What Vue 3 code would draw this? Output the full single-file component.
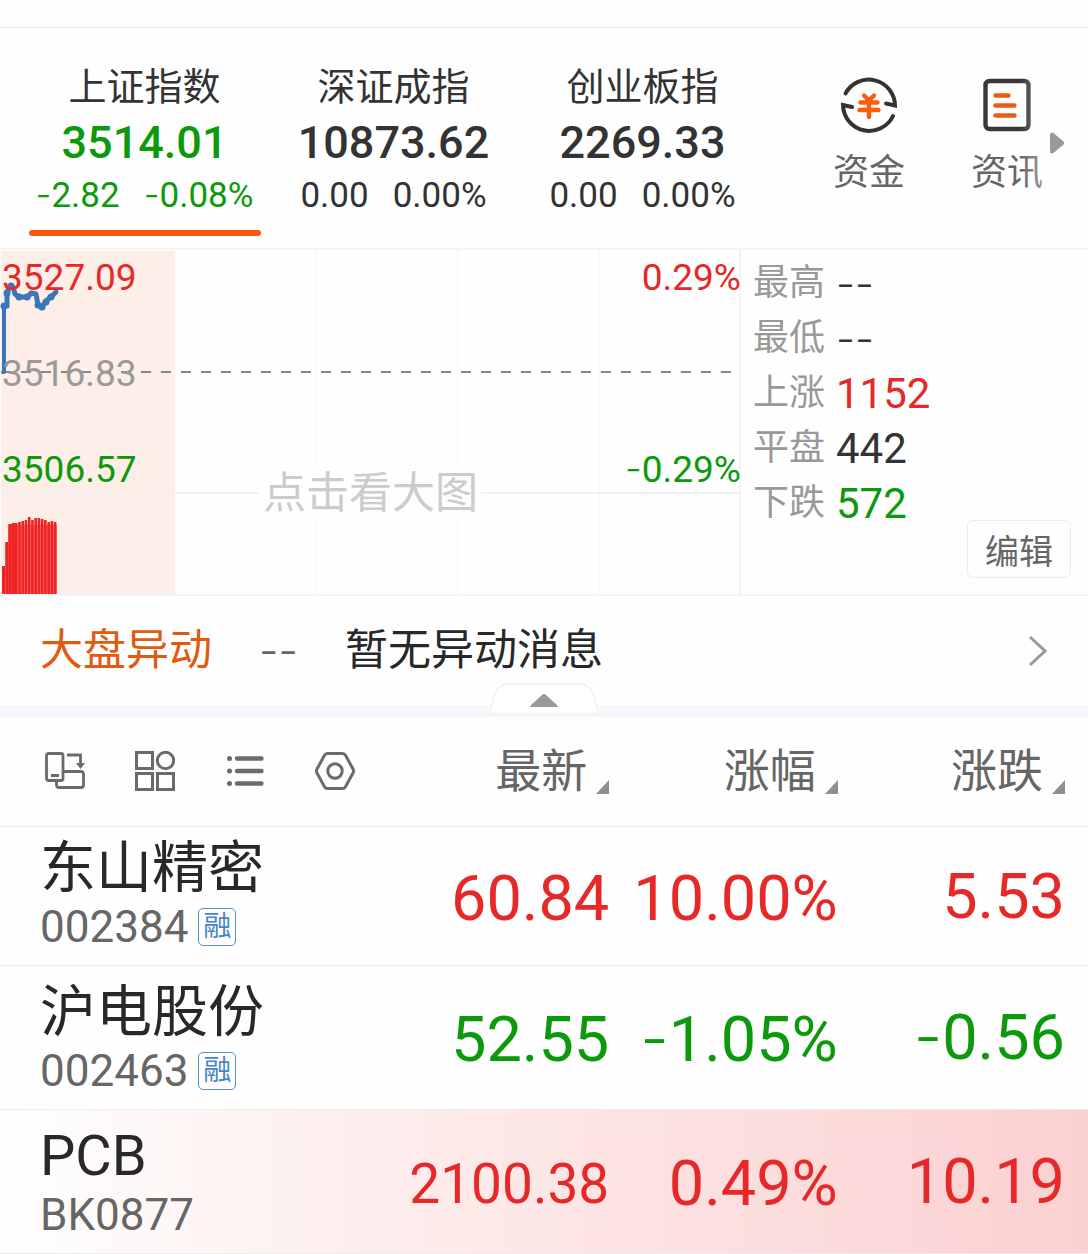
<template>
  <div class="market">
    <div class="market-strip"></div>

    <header class="summary">
      <button
        type="button"
        class="index-tab"
        :class="[{ active: index === activeIndex }, item.trend]"
        v-for="(item, index) in indices"
        :key="item.name"
        @click="activeIndex = index"
      >
        <span class="index-name">{{ item.name }}</span>
        <span class="index-price">{{ item.price }}</span>
        <span class="index-change">
          <span v-for="value in [item.change, item.percent]" :key="value">
            <span class="sign minus" v-if="isNegative(value)">-</span>{{ unsigned(value) }}
          </span>
        </span>
      </button>
      <nav class="links">
        <a class="link" href="#funds">
          <svg class="link-icon" viewBox="0 0 60 60" aria-hidden="true">
            <g fill="none" stroke="#333" stroke-width="4" stroke-linecap="round" stroke-linejoin="miter">
              <path d="M6.500 19.500A26.300 26.300 0 0 1 56 31.500L47 29.500" />
              <path d="M54 42A26.300 26.300 0 0 1 4 31L13 33" />
            </g>
            <path
              d="M25 21.500l5 5 5-5M21.500 28.500h17M20.500 36h19M30 27.500v15.500"
              fill="none"
              stroke="#ff5a0a"
              stroke-width="4.400"
              stroke-linecap="round"
            />
          </svg>
          <span>资金</span>
        </a>
        <a class="link" href="#news">
          <svg class="link-icon" viewBox="0 0 60 60" aria-hidden="true">
            <rect x="8.500" y="7" width="43" height="48" rx="4" fill="none" stroke="#383838" stroke-width="4.400" />
            <path d="M18.500 21.500h13M18.500 31.500h19M18.500 41.500h19" fill="none" stroke="#ea5b14" stroke-width="4.400" stroke-linecap="round" />
          </svg>
          <span>资讯</span>
        </a>
      </nav>
      <button type="button" class="links-more" aria-label="更多">
        <svg viewBox="0 0 16 24" aria-hidden="true">
          <path d="M1 4.500Q1 0 4.500 2L14.500 10.500Q16 12 14.500 13.500L4.500 22Q1 24 1 19.500Z" fill="#999" />
        </svg>
      </button>
    </header>

    <section class="overview">
      <div class="chart">
        <svg class="chart-canvas" viewBox="0 0 741 344" preserveAspectRatio="none" aria-hidden="true">
          <rect x="1" y="1" width="174" height="343" fill="#fdeee8" />
          <path d="M89.500 1V344M316.500 1V344M457.500 1V344M599.500 1V344" stroke="#f0f0f0" stroke-dasharray="1 1" />
          <path d="M0 243H741" stroke="#f1f1f1" stroke-width="2" />
          <path d="M740 0V344" stroke="#f4f4f4" stroke-width="2" />
          <path d="M1 122H733" stroke="#888" stroke-width="2" stroke-dasharray="10 10" />
          <path d="M2 122H4V56" fill="none" stroke="#3a76bc" stroke-width="4" stroke-linejoin="round" />
          <path
            d="M4 56H7V44L9 37L13 37L15 44L19 47L28 47L31 43L36 44L38 55L42 57L46 51L51 47L56 42"
            fill="none"
            stroke="#3a76bc"
            stroke-width="5"
            stroke-linecap="round"
            stroke-linejoin="round"
          />
          <circle v-for="p in ticks" :key="p[0]" :cx="p[0]" :cy="p[1]" r="3.500" fill="#3a76bc" />
          <rect x="8" y="275" width="49" height="69" fill="#ff7a78" />
          <rect
            v-for="(top, index) in volumes"
            :key="index"
            :x="2 + index * volumeStep"
            :y="top"
            :width="index < 4 ? volumeStep : volumeStep - 0.6"
            :height="344 - top"
            fill="#ee2424"
          />
        </svg>
        <div class="chart-labels">
          <span class="up">3527.09</span>
          <span class="flat">3516.83</span>
          <span class="down">3506.57</span>
        </div>
        <div class="chart-labels right">
          <span class="up">0.29%</span>
          <span class="down"><span class="sign minus">-</span>0.29%</span>
        </div>
        <button type="button" class="chart-hint">点击看大图</button>
      </div>
      <div class="stats">
        <dl class="stats-list">
          <div class="stat" v-for="stat in stats" :key="stat.label">
            <dt>{{ stat.label }}</dt>
            <dd :class="[stat.trend, { sign: stat.value === '--' }]">{{ stat.value }}</dd>
          </div>
        </dl>
        <button type="button" class="edit">编辑</button>
      </div>
    </section>

    <a class="notice" href="#notice">
      <span class="notice-title">大盘异动</span>
      <span class="notice-time sign">--</span>
      <span>暂无异动消息</span>
      <svg class="notice-arrow" viewBox="0 0 20 32" aria-hidden="true">
        <path d="M2 2L17 16L2 30" fill="none" stroke="#999" stroke-width="3" />
      </svg>
    </a>

    <div class="divider">
      <button type="button" class="collapse" aria-label="收起">
        <svg viewBox="0 0 110 33" aria-hidden="true">
          <path d="M1 31L5 13Q9 1 21 1H89Q101 1 105 13L109 31Z" fill="#fff" stroke="#f3f4f6" stroke-width="2" />
          <path d="M42 22L53 12Q55 10 57 12L68 22Q70 24 67 24H43Q40 24 42 22Z" fill="#999" />
        </svg>
      </button>
    </div>

    <table class="quotes">
      <colgroup>
        <col class="col-name" />
        <col class="col-value" />
        <col class="col-value" />
        <col class="col-last" />
      </colgroup>
      <thead>
        <tr>
          <th>
            <div class="tools">
              <button type="button" class="tool" aria-label="横屏">
                <svg viewBox="0 0 40 40" aria-hidden="true">
                  <g fill="none" stroke="#6b6b6b" stroke-width="2.800">
                    <rect x="1.500" y="2.500" width="16.500" height="27" rx="2" />
                    <path d="M18.500 20.500H36Q38.500 20.500 38.500 23V34Q38.500 36.500 36 36.500H14Q11.500 36.500 11.500 34V30" />
                    <path d="M6 24.500H14M22 4H35.500V13" />
                  </g>
                  <path d="M31 12H40L35.500 18Z" fill="#6b6b6b" />
                </svg>
              </button>
              <button type="button" class="tool" aria-label="宫格">
                <svg viewBox="0 0 40 40" aria-hidden="true">
                  <g fill="none" stroke="#6b6b6b" stroke-width="3">
                    <rect x="1.500" y="1.500" width="16" height="16" />
                    <circle cx="30.500" cy="9.500" r="8.200" />
                    <rect x="1.500" y="22.500" width="16" height="16" />
                    <rect x="22.500" y="22.500" width="16" height="16" />
                  </g>
                </svg>
              </button>
              <button type="button" class="tool" aria-label="列表">
                <svg viewBox="0 0 40 40" aria-hidden="true">
                  <path d="M12 7.500H36.500M12 20H36.500M12 32.500H36.500" stroke="#6b6b6b" stroke-width="4.400" stroke-linecap="round" />
                  <g fill="#6b6b6b">
                    <circle cx="4.500" cy="7.500" r="2.500" />
                    <circle cx="4.500" cy="20" r="2.500" />
                    <circle cx="4.500" cy="32.500" r="2.500" />
                  </g>
                </svg>
              </button>
              <button type="button" class="tool" aria-label="设置">
                <svg viewBox="0 0 40 40" aria-hidden="true">
                  <g fill="none" stroke="#6b6b6b" stroke-width="3">
                    <path d="M12.500 2.500H27.500Q29.500 2.500 30.500 4.300L38 18Q39 20 38 22L30.500 35.700Q29.500 37.500 27.500 37.500H12.500Q10.500 37.500 9.500 35.700L2 22Q1 20 2 18L9.500 4.300Q10.500 2.500 12.500 2.500Z" />
                    <circle cx="20" cy="20" r="7.200" />
                  </g>
                </svg>
              </button>
            </div>
          </th>
          <th v-for="column in columns" :key="column">
            <button type="button" class="sort">
              <span>{{ column }}</span>
              <svg class="sort-mark" viewBox="0 0 13 14" aria-hidden="true"><path d="M13 0V14H0Z" fill="#8e8e93" /></svg>
            </button>
          </th>
        </tr>
      </thead>
      <tbody>
        <tr v-for="row in quotes" :key="row.code" :class="[row.trend, { flash: row.flash }]">
          <td class="stock">
            <div class="stock-name">{{ row.name }}</div>
            <div class="stock-code">
              <span>{{ row.code }}</span>
              <span class="badge" v-if="row.margin">融</span>
            </div>
          </td>
          <td
            class="value"
            :class="{ long: value.length > 6 }"
            v-for="value in [row.price, row.percent, row.change]"
            :key="value"
          >
            <span class="sign minus" v-if="isNegative(value)">-</span>{{ unsigned(value) }}
          </td>
        </tr>
      </tbody>
    </table>
  </div>
</template>

<script setup>
import {ref} from 'vue';

const activeIndex = ref(0);

const indices = [
  { name: '上证指数', price: '3514.01', change: '-2.82', percent: '-0.08%', trend: 'down' },
  { name: '深证成指', price: '10873.62', change: '0.00', percent: '0.00%', trend: '' },
  { name: '创业板指', price: '2269.33', change: '0.00', percent: '0.00%', trend: '' },
];

const stats = [
  { label: '最高', value: '--', trend: '' },
  { label: '最低', value: '--', trend: '' },
  { label: '上涨', value: '1152', trend: 'up' },
  { label: '平盘', value: '442', trend: '' },
  { label: '下跌', value: '572', trend: 'down' },
];

const columns = ['最新', '涨幅', '涨跌'];

const quotes = [
  { name: '东山精密', code: '002384', margin: true, price: '60.84', percent: '10.00%', change: '5.53', trend: 'up' },
  { name: '沪电股份', code: '002463', margin: true, price: '52.55', percent: '-1.05%', change: '-0.56', trend: 'down' },
  { name: 'PCB', code: 'BK0877', price: '2100.38', percent: '0.49%', change: '10.19', trend: 'up', flash: true },
];

// minute ticks and volume tops, in chart units
const ticks = [[4, 56], [7, 43], [11, 36], [19, 47], [27, 47], [38, 55], [42, 57], [46, 52], [51, 47]];
const volumes = [316, 292, 274, 273, 273, 272, 271, 270, 267, 270, 268, 268, 269, 270, 272, 271, 272];
const volumeStep = 55 / volumes.length;

const isNegative = (value) => value.startsWith('-');
const unsigned = (value) => value.replace('-', '');
</script>

<style>
body {
  margin: 0;
  background: #fefefe;
}
</style>

<style scoped>
.market {
  font-family: Roboto, "Noto Sans CJK SC", sans-serif;
  color: #333;
}
.market * {
  box-sizing: border-box;
}
button {
  margin: 0;
  padding: 0;
  border: 0;
  background: none;
  font: inherit;
  color: inherit;
  cursor: pointer;
}
a {
  color: inherit;
  text-decoration: none;
}
svg {
  display: block;
}
.sign {
  font-family: Inter, sans-serif;
  font-weight: 300;
}
/* keeps the second font from making the line taller */
.minus {
  line-height: 0;
}
.up {
  color: #e62828;
}
.down {
  color: #0c9a0c;
}
.flat {
  color: #999;
}

.market-strip {
  height: 28px;
  border-bottom: 1px solid #e2e2e2;
}

.summary {
  position: relative;
  display: flex;
  padding: 34px 12px 12px 20px;
  border-bottom: 2px solid #f4f4f4;
}
.index-tab {
  flex: 249 1 0;
  display: flex;
  flex-direction: column;
  align-items: center;
  white-space: nowrap;
}
.index-tab::after {
  content: "";
  width: 232px;
  height: 6px;
  margin-top: 12px;
  border-radius: 3px;
}
.index-tab.active::after {
  background: #f75a0c;
}
.index-name {
  font-size: 38px;
  line-height: 50px;
  color: #333;
}
.index-price {
  font-size: 45px;
  font-weight: 500;
  line-height: 62px;
}
.index-change {
  display: flex;
  gap: 24px;
  font-size: 35px;
  line-height: 44px;
}
.links {
  flex: 276 1 0;
  display: flex;
  margin-left: 33px;
  padding-top: 12px;
}
.link {
  flex: 1;
  display: flex;
  flex-direction: column;
  align-items: center;
  gap: 14px;
  font-size: 36px;
  line-height: 50px;
  color: #666;
}
.link-icon {
  width: 60px;
  height: 60px;
}
.links-more {
  position: absolute;
  top: 0;
  right: 0;
  bottom: 0;
  width: 68px;
  padding-left: 29px;
  background: linear-gradient(to right, rgba(254, 254, 254, 0), rgba(254, 254, 254, 0.6) 60%);
}
.links-more svg {
  width: 16px;
  height: 24px;
  margin-top: 10px;
}

.overview {
  display: flex;
  border-bottom: 2px solid #f4f4f4;
}
.chart {
  position: relative;
  width: 68.1%;
}
.chart-canvas {
  width: 100%;
  height: 344px;
}
.chart-labels {
  position: absolute;
  top: 4px;
  left: 2px;
  display: flex;
  flex-direction: column;
  gap: 48px;
  font-size: 37px;
  line-height: 48px;
}
.chart-labels.right {
  left: auto;
  right: 0;
  gap: 144px;
  text-align: right;
}
.chart-hint {
  position: absolute;
  top: 217px;
  left: 50%;
  transform: translateX(-50%);
  padding: 0 4px;
  background: #fefefe;
  font-size: 43px;
  line-height: 52px;
  color: #ccc;
  white-space: nowrap;
}
.stats {
  flex: 1;
  display: flex;
  justify-content: space-between;
  padding: 6px 17px 16px 12px;
}
.stats-list {
  margin: 0;
}
.stat {
  display: flex;
  gap: 11px;
  line-height: 55px;
}
.stat dt {
  font-size: 36px;
  color: #999;
}
.stat dd {
  margin: 0;
  font-size: 42px;
}
.edit {
  align-self: flex-end;
  width: 104px;
  height: 58px;
  border: 1px solid #ececec;
  border-radius: 6px;
  font-size: 34px;
  color: #666;
}

.notice {
  display: flex;
  align-items: center;
  gap: 47px;
  padding: 0 40px;
  font-size: 43px;
  line-height: 109px;
  color: #282828;
}
.notice-title {
  color: #e05a10;
}
.notice-time {
  color: #666;
}
.notice-arrow {
  width: 20px;
  height: 32px;
  margin-left: auto;
}

.divider {
  position: relative;
  height: 12px;
  background: #f5f7fa;
}
.collapse {
  position: absolute;
  bottom: 1px;
  left: 50%;
  transform: translateX(-50%);
}
.collapse svg {
  width: 110px;
  height: 33px;
}

.quotes {
  width: 100%;
  table-layout: fixed;
  border-collapse: separate;
  border-spacing: 0;
}
.col-name {
  width: 35%;
}
.col-value {
  width: 21%;
}
.col-last {
  width: 23%;
}
.quotes th,
.quotes td {
  padding: 0;
  border-bottom: 1px solid #ececec;
  text-align: right;
}
.quotes th {
  height: 110px;
  padding-bottom: 2px;
  font-weight: 400;
}
.quotes th:last-child,
.quotes td:last-child {
  padding-right: 23px;
}
.tools {
  display: flex;
  gap: 50px;
  padding-left: 45px;
}
.tool svg {
  width: 40px;
  height: 40px;
}
.sort {
  display: inline-flex;
  align-items: flex-end;
  gap: 9px;
  font-size: 46px;
  line-height: 46px;
  color: #666;
  vertical-align: middle;
}
.sort-mark {
  width: 13px;
  height: 14px;
}
.quotes .stock {
  padding: 14px 0 11px 40px;
  text-align: left;
  white-space: nowrap;
}
.quotes tbody tr:first-child .stock {
  padding-top: 9px;
}
.stock-name {
  font-size: 56px;
  line-height: 64px;
  color: #282828;
}
.stock-code {
  display: flex;
  align-items: center;
  gap: 10px;
  font-size: 44px;
  line-height: 54px;
  color: #666;
}
.badge {
  width: 38px;
  height: 38px;
  border: 1px solid #5a90c4;
  border-radius: 5px;
  font-size: 28px;
  line-height: 36px;
  text-align: center;
  color: #4a86c4;
}
.quotes .value {
  padding-top: 4px;
  font-size: 63px;
  white-space: nowrap;
}
.quotes .value:last-child {
  padding-top: 0;
}
.quotes .value.long {
  font-size: 55px;
}
.flash {
  background: linear-gradient(to right, #fefefe, #fdeceb 38%, #fbd0d0);
}
</style>
